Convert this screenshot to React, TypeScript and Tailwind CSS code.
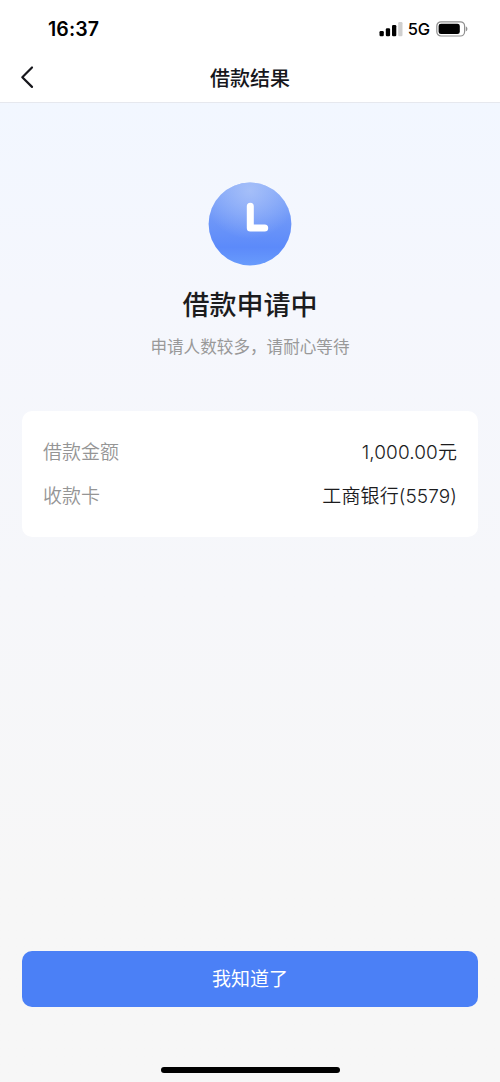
import React from 'react';

interface DetailItem {
  label: string;
  value: string;
}

const details: DetailItem[] = [
  { label: '借款金额', value: '1,000.00元' },
  { label: '收款卡', value: '工商银行(5579)' },
];

// 顶部状态栏
const StatusBar: React.FC = () => (
  <div className="flex h-[52px] shrink-0 items-center justify-between pt-[5px] pr-[32px] pl-[48px] text-black">
    <span className="text-[19.5px] leading-6 font-semibold tracking-[0.1px]">16:37</span>
    <div className="flex items-center">
      <svg width="24" height="16" viewBox="0 0 24 16">
        <rect x="0.5" y="10" width="4.3" height="5.2" rx="1.2" fill="#000" />
        <rect x="6.8" y="7.3" width="4.3" height="7.9" rx="1.2" fill="#000" />
        <rect x="13" y="4" width="4.3" height="11.2" rx="1.2" fill="#000" />
        <rect x="19.2" y="1" width="4.3" height="14.2" rx="1.2" fill="#cfcfcf" />
      </svg>
      <span className="ml-[5px] text-[16.5px] leading-5 font-[450] tracking-[-0.2px]">5G</span>
      <svg className="ml-[6px]" width="32" height="16" viewBox="0 0 32 16">
        <rect x="0.8" y="0.8" width="27.8" height="14.2" rx="4.2" fill="none" stroke="#8f8f8f" strokeWidth="1.2" />
        <rect x="2.6" y="2.7" width="21.2" height="10.4" rx="2.4" fill="#000" />
        <path d="M29.8 5.6c1 .4 1.6 1.2 1.6 2.3s-.6 1.9-1.6 2.3z" fill="#8f8f8f" />
      </svg>
    </div>
  </div>
);

// 导航栏
const NavBar: React.FC = () => (
  <header className="grid h-[51px] shrink-0 grid-cols-[1fr_auto_1fr] items-center border-b border-[#e6e8ee] px-[20px]">
    <button aria-label="返回" className="w-fit">
      <svg width="14" height="24" viewBox="0 0 14 24" fill="none" stroke="#17171c" strokeWidth="2.2" strokeLinecap="round" strokeLinejoin="round">
        <path d="M12 2.5 2.3 12.2 12 21.9" />
      </svg>
    </button>
    <h1 className="pt-[3px] text-[20px] leading-7 font-medium text-[#17171c]">借款结果</h1>
  </header>
);

const ClockIcon: React.FC = () => (
  <svg width="84" height="84" viewBox="0 0 84 84">
    <defs>
      <linearGradient id="clock-base" x1="0" y1="0" x2="0" y2="1">
        <stop offset="0" stopColor="#84a8f8" />
        <stop offset="0.45" stopColor="#6e97f8" />
        <stop offset="0.78" stopColor="#5c8afa" />
        <stop offset="1" stopColor="#689bfc" />
      </linearGradient>
      <radialGradient id="clock-light" cx="0.5" cy="0.1" r="0.58">
        <stop offset="0" stopColor="#aec5f9" stopOpacity="0.8" />
        <stop offset="1" stopColor="#aec5f9" stopOpacity="0" />
      </radialGradient>
    </defs>
    <circle cx="42" cy="42" r="41.4" fill="url(#clock-base)" />
    <circle cx="42" cy="42" r="41.4" fill="url(#clock-light)" />
    <path d="M42.3 24.2v21.8h14.4" fill="none" stroke="#fff" strokeWidth="7" strokeLinecap="round" strokeLinejoin="round" />
  </svg>
);

const App: React.FC = () => {
  return (
    <div className="flex h-[1082px] w-full flex-col bg-white font-['Inter','Noto_Sans_CJK_SC',sans-serif]">
      <StatusBar />
      <NavBar />

      <main className="flex flex-1 flex-col items-center bg-linear-to-b from-[#f2f7ff] via-[#f5f7fd] via-20% to-[#f7f7f7] to-80% px-[22px] pt-[79px]">
        <ClockIcon />
        <h2 className="mt-[20px] text-[27px] leading-[40px] font-medium text-[#1c1c1e]">借款申请中</h2>
        <p className="mt-[9px] text-[16.6px] leading-6 text-[#999]">申请人数较多，请耐心等待</p>

        {/* 借款信息 */}
        <section className="mt-[52px] flex h-[126px] w-full flex-col rounded-[10px] bg-white px-[21px] pt-[20px] text-[19px]">
          {details.map((item) => (
            <div key={item.label} className="flex h-[44px] items-center justify-between">
              <span className="font-[350] text-[#959595]">{item.label}</span>
              <span className="font-[350] tracking-[0.1px] text-[#1c1c1e]">{item.value}</span>
            </div>
          ))}
        </section>

        <button className="mt-auto h-[56px] w-full rounded-[10px] bg-[#4b80f6] pt-[2px] text-[19px] text-white">
          我知道了
        </button>
        <div className="mt-[60px] mb-[9px] h-[6px] w-[179px] rounded-full bg-black" />
      </main>
    </div>
  );
};

export default App;
